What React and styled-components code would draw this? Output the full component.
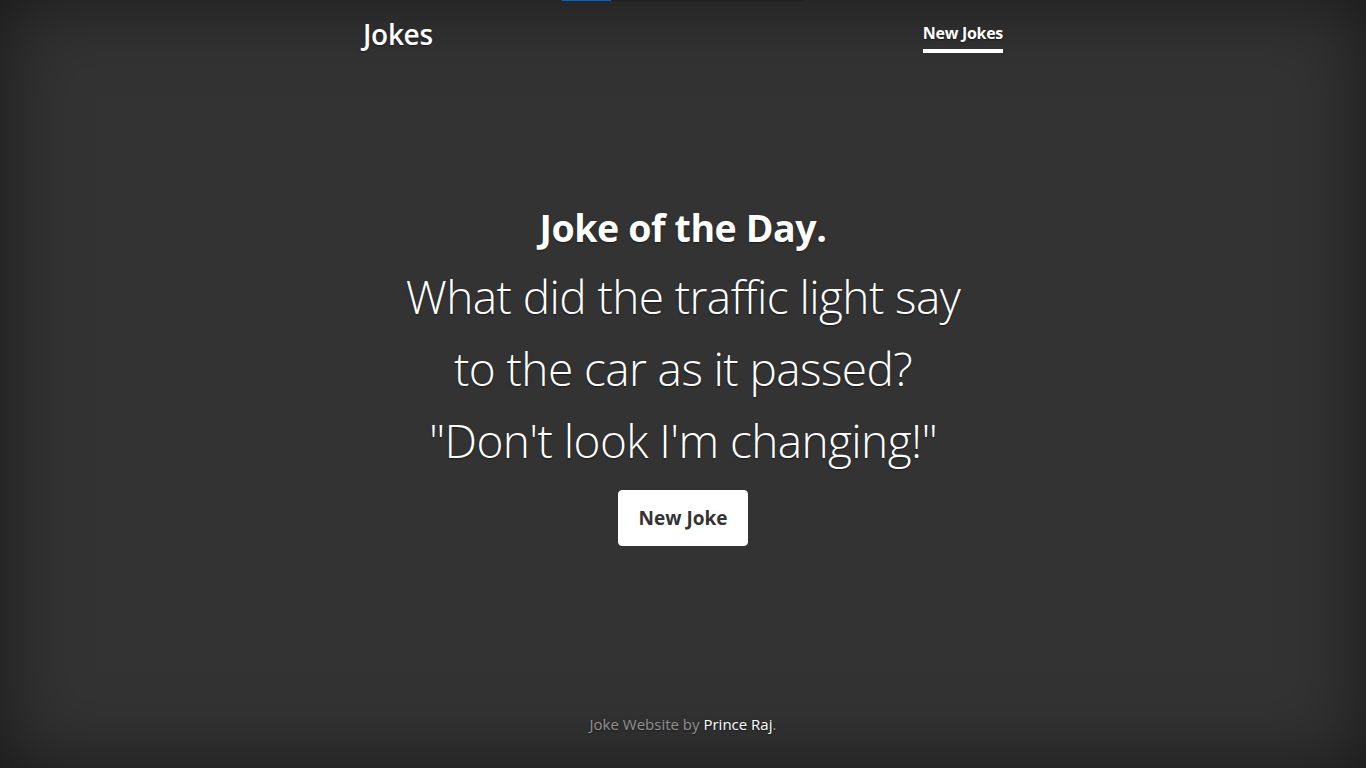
import styled, { createGlobalStyle } from "styled-components";

const GlobalStyle = createGlobalStyle`
  html, body, #root {
    height: 100%;
  }
  body {
    margin: 0;
    background-color: #333;
    color: #fff;
    font-family: "Open Sans", "Noto Sans", sans-serif;
    font-size: 16px;
    line-height: 1.5;
    text-shadow: 0 0.05rem 0.1rem rgba(0, 0, 0, 0.5);
    box-shadow: inset 0 0 5rem rgba(0, 0, 0, 0.5);
  }
  * {
    box-sizing: border-box;
  }
`;

const LoadBar = styled.div`
  position: fixed;
  top: 0;
  left: 562px;
  width: 241px;
  height: 1px;
  background: #1f1f1f;
  &::before {
    content: "";
    display: block;
    width: 49px;
    height: 1px;
    background: #0062d1;
  }
`;

const Cover = styled.div`
  display: flex;
  flex-direction: column;
  width: 100%;
  max-width: 672px;
  height: 100%;
  margin: 0 auto;
  padding: 16px;
`;

const Masthead = styled.header`
  display: flex;
  justify-content: space-between;
  align-items: flex-start;
  margin-bottom: auto;
`;

const Brand = styled.h3`
  margin: 2px 0 0;
  font-size: 28px;
  font-weight: 600;
  line-height: 1.2;
  letter-spacing: -0.3px;
`;

const Nav = styled.nav`
  display: flex;
`;

const NavLink = styled.a`
  padding: 5px 0 4px;
  font-size: 16px;
  font-weight: 700;
  line-height: 24px;
  color: #fff;
  text-decoration: none;
  border-bottom: 4px solid #fff;
  letter-spacing: -0.3px;
`;

const Main = styled.main`
  padding: 0 16px 15px;
  text-align: center;
`;

const Title = styled.h1`
  margin: 0 0 10px;
  font-size: 37.5px;
  font-weight: 700;
  line-height: 1.2;
  letter-spacing: -0.4px;
`;

const Lead = styled.p`
  max-width: 575px;
  margin: 0 auto 14px;
  font-size: 46px;
  font-weight: 300;
  line-height: 72px;
  letter-spacing: -0.6px;
`;

const Button = styled.a`
  display: inline-block;
  padding: 12px 20px;
  font-size: 19px;
  font-weight: 700;
  line-height: 30px;
  color: #333;
  text-shadow: none;
  background-color: #fff;
  border: 1px solid #fff;
  border-radius: 4px;
  text-decoration: none;
  cursor: pointer;
`;

const Footer = styled.footer`
  margin-top: auto;
  text-align: center;
  color: rgba(255, 255, 255, 0.5);
  font-size: 15px;
  line-height: 24px;
  p {
    margin: 0 0 16px;
  }
`;

const FooterLink = styled.a`
  color: #fff;
  text-decoration: none;
`;

export default function App() {
  return (
    <>
      <GlobalStyle />
      <LoadBar />
      <Cover>
        <Masthead>
          <Brand>Jokes</Brand>
          <Nav>
            <NavLink href="#">New Jokes</NavLink>
          </Nav>
        </Masthead>
        <Main>
          <Title>Joke of the Day.</Title>
          <Lead>
            What did the traffic light say to the car as it passed? "Don't look
            I'm changing!"
          </Lead>
          <Button>New Joke</Button>
        </Main>
        <Footer>
          <p>
            Joke Website by <FooterLink href="#">Prince Raj</FooterLink>.
          </p>
        </Footer>
      </Cover>
    </>
  );
}
